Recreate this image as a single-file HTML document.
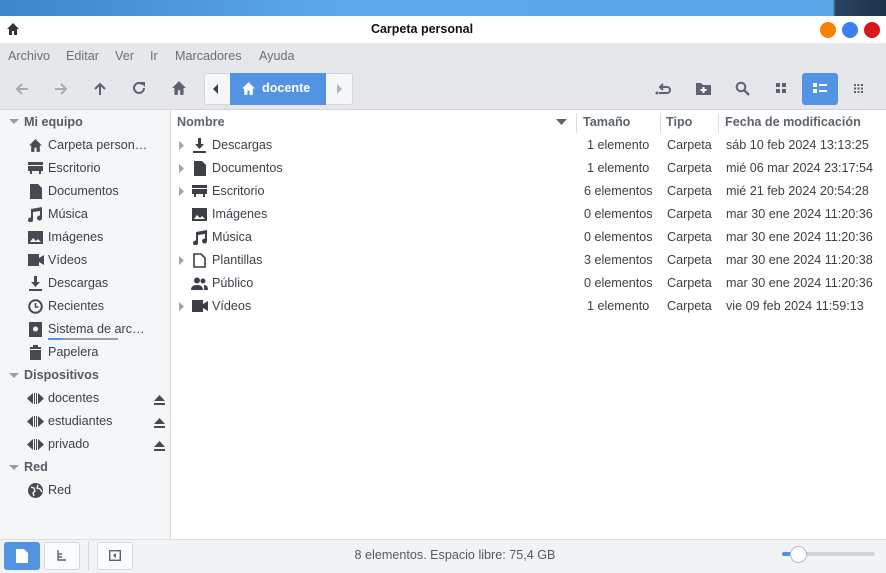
<!DOCTYPE html>
<html><head><meta charset="utf-8"><style>
*{margin:0;padding:0;box-sizing:border-box}
body{width:886px;height:573px;overflow:hidden;font-family:"Liberation Sans","DejaVu Sans",sans-serif;font-size:12.6px;color:#3c4048;background:#fff;position:relative}
.a{position:absolute;white-space:nowrap}
.wall{left:0;top:0;width:886px;height:16px;background:linear-gradient(90deg,#3d86c8,#5eaaea 40%,#5aa6e6 94%,#2a4560 94.3%,#1d3348)}
.title{left:0;top:16px;width:886px;height:27px;background:#fff}
.menu{left:0;top:43px;width:886px;height:67px;background:#e6e7eb;border-bottom:1px solid #d2d4d9}
.menu span{position:absolute;top:6px;color:#6b6f7a}
.side{left:0;top:110px;width:171px;height:429px;background:#f5f6f8;border-right:1px solid #dcdee2}
.status{left:0;top:539px;width:886px;height:34px;background:#f2f3f5;border-top:1px solid #dcdee2}
svg{position:absolute}
.hd{font-weight:bold;color:#555a64}
.col{color:#5c6370;font-weight:bold}
</style></head><body>
<div class="a wall"></div>
<div class="a title"></div>
<svg style="left:6px;top:22px" width="14" height="14" viewBox="0 0 14 14"><path d="M7 1L1 7h2v6h3V9h2v4h3V7h2z" fill="#333"/></svg>
<div class="a" style="left:322px;width:200px;top:22px;text-align:center;font-weight:bold;color:#111;font-size:12.5px">Carpeta personal</div>
<div class="a" style="left:820px;top:22px;width:16px;height:16px;border-radius:50%;background:#ff7f00"></div>
<div class="a" style="left:842px;top:22px;width:16px;height:16px;border-radius:50%;background:#3a80f0"></div>
<div class="a" style="left:864px;top:22px;width:16px;height:16px;border-radius:50%;background:#d7191c"></div>
<div class="a menu">
<span style="left:8px">Archivo</span><span style="left:66px">Editar</span><span style="left:115px">Ver</span><span style="left:150px">Ir</span><span style="left:175px">Marcadores</span><span style="left:259px">Ayuda</span>
</div>
<svg style="left:14px;top:81px" width="16" height="16" viewBox="0 0 16 16"><path d="M14 8H3M8 3L3 8l5 5" stroke="#a8abb2" stroke-width="2" fill="none"/></svg>
<svg style="left:53px;top:81px" width="16" height="16" viewBox="0 0 16 16"><path d="M2 8h11M8 3l5 5-5 5" stroke="#a8abb2" stroke-width="2" fill="none"/></svg>
<svg style="left:92px;top:81px" width="16" height="16" viewBox="0 0 16 16"><path d="M8 14V3M3 8l5-5 5 5" stroke="#5c6270" stroke-width="2" fill="none"/></svg>
<svg style="left:131px;top:80px" width="16" height="16" viewBox="0 0 16 16"><path d="M13 8a5 5 0 1 1-1.5-3.6" stroke="#5c6270" stroke-width="2" fill="none"/><path d="M9 2h5v5z" fill="#5c6270"/></svg>
<svg style="left:171px;top:80px" width="16" height="16" viewBox="0 0 14 14"><path d="M7 1L1 7h2v6h3V9h2v4h3V7h2z" fill="#5c6270"/></svg>
<div class="a" style="left:204px;top:73px;width:149px;height:32px;border:1px solid #d4d6db;border-radius:3px;background:#f6f7f8"></div>
<div class="a" style="left:230px;top:73px;width:96px;height:32px;background:#5294e2"></div>
<svg style="left:213px;top:84px" width="6" height="10"><path d="M5 0v10L0 5z" fill="#3c4048"/></svg>
<svg style="left:337px;top:84px" width="6" height="10"><path d="M0 0v10l5-5z" fill="#b0b3b9"/></svg>
<svg style="left:241px;top:81px" width="15" height="15" viewBox="0 0 14 14"><path d="M7 1L1 7h2v6h3V9h2v4h3V7h2z" fill="#fff"/></svg>
<div class="a" style="left:262px;top:81px;color:#fff;font-weight:bold">docente</div>
<svg style="left:655px;top:81px" width="18" height="16" viewBox="0 0 18 16"><path d="M4 12h8a3 3 0 0 0 0-6H6" stroke="#5c6270" stroke-width="2" fill="none"/><path d="M8 3L5 6l3 3" stroke="#5c6270" stroke-width="2" fill="none"/><circle cx="2" cy="12" r="1.5" fill="#5c6270"/></svg>
<svg style="left:696px;top:81px" width="15" height="15" viewBox="0 0 15 15"><path d="M0 2h5l2 2h8v10H0z" fill="#5c6270"/><path d="M7.5 6v6M4.5 9h6" stroke="#fff" stroke-width="2"/></svg>
<svg style="left:735px;top:81px" width="15" height="15" viewBox="0 0 15 15"><circle cx="6" cy="6" r="4.3" stroke="#5c6270" stroke-width="2" fill="none"/><path d="M9 9l5 5" stroke="#5c6270" stroke-width="2.4"/></svg>
<svg style="left:776px;top:83px" width="11" height="11"><path d="M0 0h4v4H0zM6 0h4v4H6zM0 6h4v4H0zM6 6h4v4H6z" fill="#5c6270"/></svg>
<div class="a" style="left:802px;top:73px;width:36px;height:32px;background:#5294e2;border-radius:3px"></div>
<svg style="left:813px;top:83px" width="14" height="11"><path d="M0 0h4v4H0zM0 6h4v4H0zM6 1h8v2H6zM6 7h8v2H6z" fill="#fff"/></svg>
<svg style="left:854px;top:84px" width="9" height="9"><path d="M0 0h2v2H0zM3.5 0h2v2h-2zM7 0h2v2H7zM0 3.5h2v2H0zM3.5 3.5h2v2h-2zM7 3.5h2v2H7zM0 7h2v2H0zM3.5 7h2v2h-2zM7 7h2v2H7z" fill="#5c6270"/></svg>

<div class="a side"></div>
<svg style="left:9px;top:119px" width="10" height="6"><path d="M0 0h10L5 5z" fill="#9a9da4"/></svg>
<div class="a hd" style="left:24px;top:115px">Mi equipo</div>
<div class="a" style="left:48px;top:138px">Carpeta person…</div>
<div class="a" style="left:48px;top:161px">Escritorio</div>
<div class="a" style="left:48px;top:184px">Documentos</div>
<div class="a" style="left:48px;top:207px">Música</div>
<div class="a" style="left:48px;top:230px">Imágenes</div>
<div class="a" style="left:48px;top:253px">Vídeos</div>
<div class="a" style="left:48px;top:276px">Descargas</div>
<div class="a" style="left:48px;top:299px">Recientes</div>
<div class="a" style="left:48px;top:322px">Sistema de arc…</div>
<div class="a" style="left:48px;top:338px;width:70px;height:2px;background:#9aa0aa"></div>
<div class="a" style="left:48px;top:338px;width:15px;height:2px;background:#5294e2"></div>
<div class="a" style="left:48px;top:345px">Papelera</div>
<svg style="left:9px;top:373px" width="10" height="6"><path d="M0 0h10L5 5z" fill="#9a9da4"/></svg>
<div class="a hd" style="left:24px;top:368px">Dispositivos</div>
<div class="a" style="left:48px;top:391px">docentes</div>
<div class="a" style="left:48px;top:414px">estudiantes</div>
<div class="a" style="left:48px;top:437px">privado</div>
<svg style="left:9px;top:465px" width="10" height="6"><path d="M0 0h10L5 5z" fill="#9a9da4"/></svg>
<div class="a hd" style="left:24px;top:460px">Red</div>
<div class="a" style="left:48px;top:483px">Red</div>
<svg style="left:28px;top:138px" width="15" height="15" viewBox="0 0 14 14"><path d="M7 1L1 7h2v6h3V9h2v4h3V7h2z" fill="#474a52"/></svg>
<svg style="left:28px;top:162px" width="15" height="13"><path d="M0 0h15v3H0zM0 4h15v5H13v3h-2V9H4v3H2V9H0z" fill="#474a52"/></svg>
<svg style="left:30px;top:184px" width="12" height="15"><path d="M0 0h8l4 4v11H0z" fill="#474a52"/></svg>
<svg style="left:28px;top:207px" width="14" height="15"><path d="M3 2l11-2v11a2.5 2.5 0 1 1-2-2.4V4L5 5v8a2.5 2.5 0 1 1-2-2.4z" fill="#474a52"/></svg>
<svg style="left:28px;top:231px" width="15" height="13"><path d="M0 0h15v13H0z" fill="#474a52"/><path d="M2 11l3-4 3 3 2-2 3 3z" fill="#f5f6f8"/></svg>
<svg style="left:28px;top:254px" width="16" height="12"><path d="M0 0h11v12H0zM11 4l5-3v10l-5-3z" fill="#474a52"/></svg>
<svg style="left:29px;top:276px" width="13" height="15"><path d="M5 0h3v6h3l-4.5 5L2 6h3zM0 13h13v2H0z" fill="#474a52"/></svg>
<svg style="left:28px;top:299px" width="15" height="15"><circle cx="7.5" cy="7.5" r="6.3" stroke="#474a52" stroke-width="2" fill="none"/><path d="M7.5 4v4h3" stroke="#474a52" stroke-width="1.6" fill="none"/></svg>
<svg style="left:29px;top:322px" width="13" height="15"><path d="M0 0h13v15H0z" fill="#474a52"/><circle cx="6.5" cy="7" r="2.5" fill="#f5f6f8"/></svg>
<svg style="left:29px;top:345px" width="13" height="15"><path d="M1 2h11v2H1zM4 0h5v2H4zM1 5h11v10H1z" fill="#474a52"/></svg>
<svg style="left:27px;top:393px" width="17" height="11"><path d="M0 5.5L6 0v11zM7 0h1v11H7zM9 0h1v11H9zM11 0l6 5.5-6 5.5z" fill="#474a52"/></svg>
<svg style="left:27px;top:416px" width="17" height="11"><path d="M0 5.5L6 0v11zM7 0h1v11H7zM9 0h1v11H9zM11 0l6 5.5-6 5.5z" fill="#474a52"/></svg>
<svg style="left:27px;top:439px" width="17" height="11"><path d="M0 5.5L6 0v11zM7 0h1v11H7zM9 0h1v11H9zM11 0l6 5.5-6 5.5z" fill="#474a52"/></svg>
<svg style="left:154px;top:395px" width="11" height="10"><path d="M5.5 0L11 6H0zM0 8h11v2H0z" fill="#474a52"/></svg>
<svg style="left:154px;top:418px" width="11" height="10"><path d="M5.5 0L11 6H0zM0 8h11v2H0z" fill="#474a52"/></svg>
<svg style="left:154px;top:441px" width="11" height="10"><path d="M5.5 0L11 6H0zM0 8h11v2H0z" fill="#474a52"/></svg>
<svg style="left:28px;top:483px" width="15" height="15"><circle cx="7.5" cy="7.5" r="7.5" fill="#474a52"/><path d="M3 4l3 1 1 3-2 2 1 3M10 2l-1 3 3 1 2 3" stroke="#f5f6f8" stroke-width="1.4" fill="none"/></svg>

<div class="a col" style="left:177px;top:115px">Nombre</div>
<svg style="left:556px;top:119px" width="11" height="6"><path d="M0 0h11L5.5 6z" fill="#5c6370"/></svg>
<div class="a" style="left:576px;top:113px;width:1px;height:20px;background:#dcdee2"></div>
<div class="a col" style="left:583px;top:115px">Tamaño</div>
<div class="a" style="left:660px;top:113px;width:1px;height:20px;background:#dcdee2"></div>
<div class="a col" style="left:666px;top:115px">Tipo</div>
<div class="a" style="left:718px;top:113px;width:1px;height:20px;background:#dcdee2"></div>
<div class="a col" style="left:725px;top:115px">Fecha de modificación</div>

<div class="a" style="left:212px;top:138px">Descargas</div><div class="a" style="left:587px;top:138px">1 elemento</div><div class="a" style="left:667px;top:138px">Carpeta</div><div class="a" style="left:726px;top:138px">sáb 10 feb 2024 13:13:25</div>
<div class="a" style="left:212px;top:161px">Documentos</div><div class="a" style="left:587px;top:161px">1 elemento</div><div class="a" style="left:667px;top:161px">Carpeta</div><div class="a" style="left:726px;top:161px">mié 06 mar 2024 23:17:54</div>
<div class="a" style="left:212px;top:184px">Escritorio</div><div class="a" style="left:584px;top:184px">6 elementos</div><div class="a" style="left:667px;top:184px">Carpeta</div><div class="a" style="left:726px;top:184px">mié 21 feb 2024 20:54:28</div>
<div class="a" style="left:212px;top:207px">Imágenes</div><div class="a" style="left:584px;top:207px">0 elementos</div><div class="a" style="left:667px;top:207px">Carpeta</div><div class="a" style="left:726px;top:207px">mar 30 ene 2024 11:20:36</div>
<div class="a" style="left:212px;top:230px">Música</div><div class="a" style="left:584px;top:230px">0 elementos</div><div class="a" style="left:667px;top:230px">Carpeta</div><div class="a" style="left:726px;top:230px">mar 30 ene 2024 11:20:36</div>
<div class="a" style="left:212px;top:253px">Plantillas</div><div class="a" style="left:584px;top:253px">3 elementos</div><div class="a" style="left:667px;top:253px">Carpeta</div><div class="a" style="left:726px;top:253px">mar 30 ene 2024 11:20:38</div>
<div class="a" style="left:212px;top:276px">Público</div><div class="a" style="left:584px;top:276px">0 elementos</div><div class="a" style="left:667px;top:276px">Carpeta</div><div class="a" style="left:726px;top:276px">mar 30 ene 2024 11:20:36</div>
<div class="a" style="left:212px;top:299px">Vídeos</div><div class="a" style="left:587px;top:299px">1 elemento</div><div class="a" style="left:667px;top:299px">Carpeta</div><div class="a" style="left:726px;top:299px">vie 09 feb 2024 11:59:13</div>
<svg style="left:179px;top:141px" width="5" height="9"><path d="M0 0l5 4.5L0 9z" fill="#a0a3aa"/></svg>
<svg style="left:179px;top:164px" width="5" height="9"><path d="M0 0l5 4.5L0 9z" fill="#a0a3aa"/></svg>
<svg style="left:179px;top:187px" width="5" height="9"><path d="M0 0l5 4.5L0 9z" fill="#a0a3aa"/></svg>
<svg style="left:179px;top:256px" width="5" height="9"><path d="M0 0l5 4.5L0 9z" fill="#a0a3aa"/></svg>
<svg style="left:179px;top:302px" width="5" height="9"><path d="M0 0l5 4.5L0 9z" fill="#a0a3aa"/></svg>
<svg style="left:193px;top:138px" width="13" height="15"><path d="M5 0h3v6h3l-4.5 5L2 6h3zM0 13h13v2H0z" fill="#3c3f46"/></svg>
<svg style="left:194px;top:161px" width="12" height="15"><path d="M0 0h8l4 4v11H0z" fill="#3c3f46"/></svg>
<svg style="left:192px;top:185px" width="15" height="13"><path d="M0 0h15v3H0zM0 4h15v5H13v3h-2V9H4v3H2V9H0z" fill="#3c3f46"/></svg>
<svg style="left:192px;top:208px" width="15" height="13"><path d="M0 0h15v13H0z" fill="#3c3f46"/><path d="M2 11l3-4 3 3 2-2 3 3z" fill="#fff"/></svg>
<svg style="left:193px;top:230px" width="14" height="15"><path d="M3 2l11-2v11a2.5 2.5 0 1 1-2-2.4V4L5 5v8a2.5 2.5 0 1 1-2-2.4z" fill="#3c3f46"/></svg>
<svg style="left:193px;top:253px" width="13" height="15"><path d="M1 1h7l4 4v9H1z" stroke="#3c3f46" stroke-width="1.6" fill="none"/></svg>
<svg style="left:191px;top:277px" width="17" height="13"><circle cx="6" cy="3.5" r="3" fill="#3c3f46"/><circle cx="12" cy="4" r="2.5" fill="#3c3f46"/><path d="M0 13c0-4 3-5 6-5s6 1 6 5zM13 8c2 0 4 1 4 5h-4z" fill="#3c3f46"/></svg>
<svg style="left:192px;top:300px" width="16" height="12"><path d="M0 0h11v12H0zM11 4l5-3v10l-5-3z" fill="#3c3f46"/></svg>

<div class="a status"></div>
<div class="a" style="left:4px;top:542px;width:36px;height:28px;background:#5294e2;border-radius:3px"></div>
<svg style="left:16px;top:549px" width="12" height="14"><path d="M0 0h8l4 4v10H0z" fill="#fff"/></svg>
<div class="a" style="left:44px;top:542px;width:36px;height:28px;background:#fafbfc;border:1px solid #d4d6db;border-radius:3px"></div>
<svg style="left:57px;top:550px" width="10" height="11"><path d="M1 0v10h8M1 4h4M1 7h4" stroke="#5c6270" stroke-width="1.4" fill="none"/></svg>
<div class="a" style="left:88px;top:542px;width:1px;height:28px;background:#d4d6db"></div>
<div class="a" style="left:97px;top:542px;width:36px;height:28px;background:#fafbfc;border:1px solid #d4d6db;border-radius:3px"></div>
<svg style="left:109px;top:550px" width="12" height="11"><rect x="0.7" y="0.7" width="10.6" height="9.6" stroke="#5c6270" stroke-width="1.4" fill="none"/><path d="M7 3L4 5.5 7 8z" fill="#5c6270"/></svg>
<div class="a" style="left:0;width:910px;top:548px;text-align:center;color:#555a64">8 elementos. Espacio libre: 75,4 GB</div>
<div class="a" style="left:782px;top:552px;width:93px;height:4px;border-radius:2px;background:#cfd3da"></div>
<div class="a" style="left:782px;top:552px;width:12px;height:4px;border-radius:2px;background:#5294e2"></div>
<div class="a" style="left:790px;top:546px;width:17px;height:17px;border-radius:50%;background:#fff;border:1px solid #b8bcc4"></div>
</body></html>
